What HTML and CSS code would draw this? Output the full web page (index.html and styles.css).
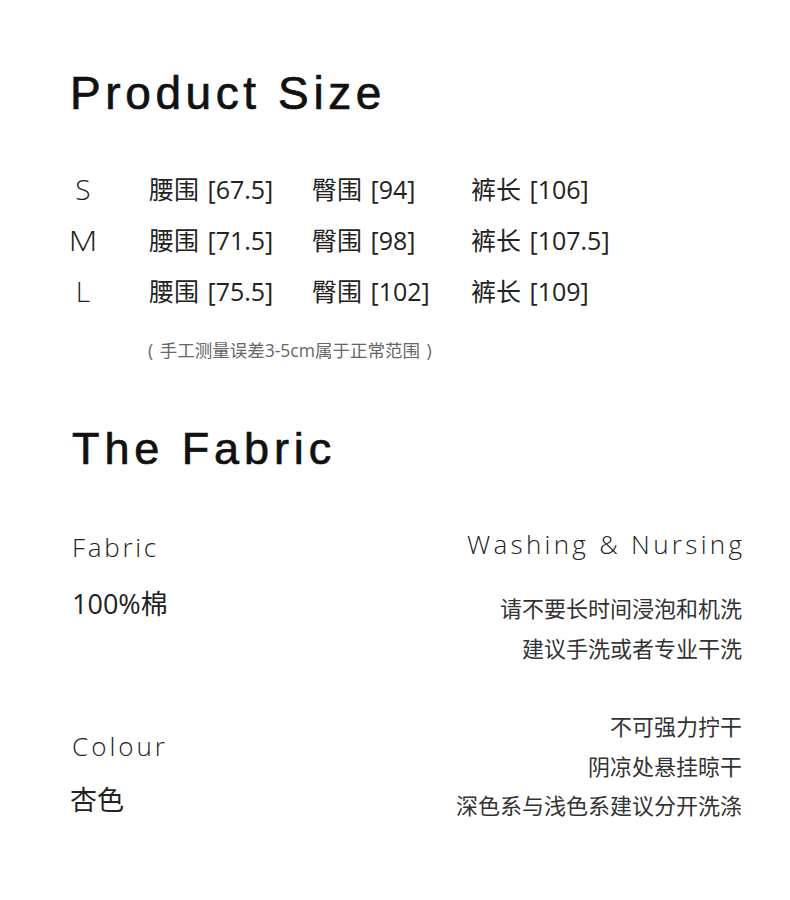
FILE: index.html
```html
<!DOCTYPE html>
<html lang="zh-CN">
<head>
<meta charset="utf-8">
<title>Product Size</title>
<link rel="stylesheet" href="styles.css">
</head>
<body>
<main class="page">
  <section class="size">
    <h1 class="title">Product Size</h1>
    <div class="size-table">
      <div class="size-row">
        <span class="sz"><span class="sz-box">S</span></span>
        <span class="cell">腰围 [67.5]</span>
        <span class="cell">臀围 [94]</span>
        <span class="cell">裤长 [106]</span>
      </div>
      <div class="size-row">
        <span class="sz"><span class="sz-box sz-wide">M</span></span>
        <span class="cell">腰围 [71.5]</span>
        <span class="cell">臀围 [98]</span>
        <span class="cell">裤长 [107.5]</span>
      </div>
      <div class="size-row">
        <span class="sz"><span class="sz-box">L</span></span>
        <span class="cell">腰围 [75.5]</span>
        <span class="cell">臀围 [102]</span>
        <span class="cell">裤长 [109]</span>
      </div>
    </div>
    <p class="note">( 手工测量误差3-5cm属于正常范围 )</p>
  </section>

  <section class="fabric">
    <h2 class="title title-2">The Fabric</h2>
    <div class="fabric-cols">
      <div class="col-left">
        <div class="label">Fabric</div>
        <div class="value">100%棉</div>
        <div class="label label-colour">Colour</div>
        <div class="value value-colour">杏色</div>
      </div>
      <div class="col-right">
        <div class="label-right">Washing &amp; Nursing</div>
        <div class="care care-1">
          <div>请不要长时间浸泡和机洗</div>
          <div>建议手洗或者专业干洗</div>
        </div>
        <div class="care care-2">
          <div>不可强力拧干</div>
          <div>阴凉处悬挂晾干</div>
          <div>深色系与浅色系建议分开洗涤</div>
        </div>
      </div>
    </div>
  </section>
</main>
</body>
</html>
```
FILE: styles.css
```css
html, body {
  margin: 0;
  padding: 0;
  background: #ffffff;
}

.page {
  width: 790px;
  height: 900px;
  box-sizing: border-box;
  padding: 70px 48px 0 70px;
  font-family: "Open Sans", "Noto Sans CJK SC", sans-serif;
  color: #222;
}

.title {
  margin: 0;
  font-family: "Liberation Sans", Arial, sans-serif;
  font-weight: 400;
  font-size: 46px;
  line-height: 46px;
  letter-spacing: 4.6px;
  color: #111;
  -webkit-text-stroke: 0.7px #111;
}

.size-table {
  margin-top: 48px;
}

.size-row {
  display: grid;
  grid-template-columns: 79px 163px 159px auto;
  height: 51px;
  line-height: 51px;
  font-size: 25px;
  color: #222;
}

.sz-box {
  display: inline-block;
  width: 26px;
  text-align: center;
  font-size: 28px;
  font-weight: 300;
}

.sz-wide {
  transform: scaleX(1.2);
}

.cell {
  white-space: nowrap;
  word-spacing: 2px;
}

.note {
  margin: 21px 0 0 78px;
  font-size: 17.5px;
  line-height: 24px;
  color: #666;
  word-spacing: 2px;
}

.title-2 {
  margin-top: 64px;
  font-size: 45px;
  line-height: 45px;
  letter-spacing: 4.9px;
  padding-left: 2px;
}

.fabric-cols {
  display: flex;
  justify-content: space-between;
  margin-top: 53px;
}

.col-left {
  display: flex;
  flex-direction: column;
  padding-left: 2px;
}

.label {
  margin-top: 3px;
  font-size: 26px;
  font-weight: 300;
  letter-spacing: 2.7px;
  line-height: 40px;
  height: 40px;
  color: #222;
}

.value {
  margin-top: 17px;
  font-size: 27px;
  line-height: 40px;
  height: 40px;
  color: #222;
}

.label-colour {
  margin-top: 102px;
  letter-spacing: 3px;
}

.value-colour {
  margin-top: 14px;
  margin-left: -2px;
}

.col-right {
  display: flex;
  flex-direction: column;
  align-items: flex-end;
  text-align: right;
}

.label-right {
  font-size: 26px;
  font-weight: 300;
  letter-spacing: 3.3px;
  margin-right: -3.3px;
  line-height: 40px;
  height: 40px;
  color: #222;
}

.care {
  font-size: 22px;
  line-height: 39.5px;
  color: #333;
}

.care-1 {
  margin-top: 25px;
}

.care-2 {
  margin-top: 39px;
}
```
